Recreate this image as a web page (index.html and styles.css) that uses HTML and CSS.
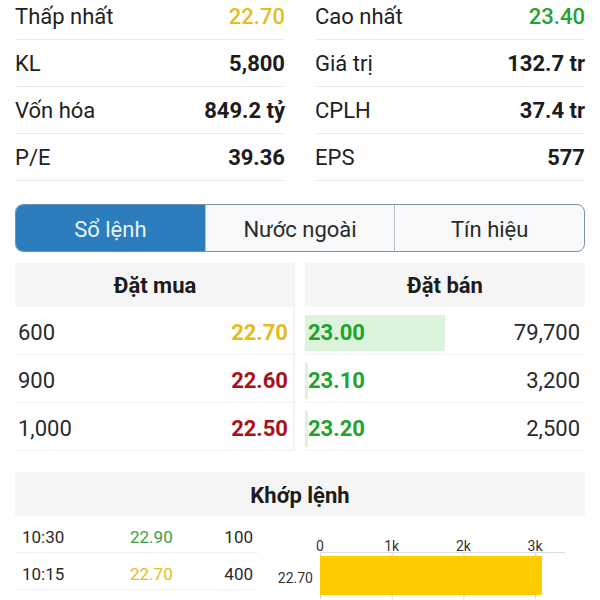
FILE: index.html
```html
<!DOCTYPE html>
<html lang="vi">
  <head>
    <meta charset="UTF-8" />
    <meta name="viewport" content="width=device-width, initial-scale=1" />
    <title>Sổ lệnh</title>
    <link rel="stylesheet" href="styles.css">
  </head>
  <body>
    <div class="page">
      <div class="stats">
        <div class="stat"><span class="label">Thấp nhất</span><span class="val plain yellow">22.70</span></div>
        <div class="stat"><span class="label">Cao nhất</span><span class="val plain green">23.40</span></div>
        <div class="stat"><span class="label">KL</span><span class="val">5,800</span></div>
        <div class="stat"><span class="label">Giá trị</span><span class="val">132.7 tr</span></div>
        <div class="stat"><span class="label">Vốn hóa</span><span class="val">849.2 tỷ</span></div>
        <div class="stat"><span class="label">CPLH</span><span class="val">37.4 tr</span></div>
        <div class="stat"><span class="label">P/E</span><span class="val">39.36</span></div>
        <div class="stat"><span class="label">EPS</span><span class="val">577</span></div>
      </div>

      <div class="tabs">
        <div class="tab active">Sổ lệnh</div>
        <div class="tab">Nước ngoài</div>
        <div class="tab">Tín hiệu</div>
      </div>

      <div class="book">
        <div class="side buy">
          <div class="side-head">Đặt mua</div>
          <div class="row"><span class="qty">600</span><span class="price yellow">22.70</span></div>
          <div class="row"><span class="qty">900</span><span class="price red">22.60</span></div>
          <div class="row"><span class="qty">1,000</span><span class="price red">22.50</span></div>
        </div>
        <div class="side sell">
          <div class="side-head">Đặt bán</div>
          <div class="row"><span class="depth" style="width: 140px"></span><span class="price green">23.00</span><span class="qty">79,700</span></div>
          <div class="row"><span class="depth" style="width: 3px"></span><span class="price green">23.10</span><span class="qty">3,200</span></div>
          <div class="row"><span class="depth" style="width: 3px"></span><span class="price green">23.20</span><span class="qty">2,500</span></div>
        </div>
      </div>

      <div class="match">
        <div class="match-head">Khớp lệnh</div>
        <div class="match-body">
          <div class="trades">
            <div class="trade"><span>10:30</span><span class="green-soft">22.90</span><span class="num">100</span></div>
            <div class="trade"><span>10:15</span><span class="yellow">22.70</span><span class="num">400</span></div>
          </div>
          <div class="chart">
            <div></div>
            <div class="axis">
              <span class="tick" style="left: 0px">0</span>
              <span class="tick" style="left: 71.7px">1k</span>
              <span class="tick" style="left: 143.4px">2k</span>
              <span class="tick" style="left: 215.1px">3k</span>
            </div>
            <div class="bar-label">22.70</div>
            <div class="plot">
              <div class="bar" style="width: 222px"></div>
            </div>
          </div>
        </div>
      </div>
    </div>
  </body>
</html>
```

FILE: styles.css
```css
body {
  margin: 0;
  font-family: Roboto, "Liberation Sans", sans-serif;
  color: #222;
  background-color: #fff;
}
.page {
  padding: 0 15px;
}
.yellow {
  color: #e3bd1e;
}
.green {
  color: #1fa22e;
}
.green-soft {
  color: #3d9e46;
}
.red {
  color: #a8101a;
}

/* thong tin co phieu */
.stats {
  display: grid;
  grid-template-columns: 1fr 1fr;
  column-gap: 30px;
  margin-top: -7px;
}
.stat {
  display: flex;
  justify-content: space-between;
  align-items: center;
  height: 45px;
  padding-top: 1px;
  border-bottom: 1px solid #ececec;
  font-size: 22px;
}
.val {
  font-weight: bold;
  color: #1c1c1c;
}
.val.plain {
  font-weight: 500;
}
.val.plain.yellow {
  color: #e3bd1e;
}
.val.plain.green {
  color: #1fa22e;
}

/* tabs */
.tabs {
  display: flex;
  margin-top: 23px;
  height: 46px;
  border: 1px solid #7593ab;
  border-radius: 8px;
  overflow: hidden;
  background-color: #f8f9fa;
}
.tab {
  flex: 1;
  display: flex;
  justify-content: center;
  align-items: center;
  padding-top: 2px;
  font-size: 22px;
  color: #2a2a2a;
  border-left: 1px solid #b5c3cf;
}
.tab:first-child {
  border-left: none;
}
.tab.active {
  background-color: #2b7dbd;
  color: #e9f4ff;
}

/* so lenh */
.book {
  display: grid;
  grid-template-columns: 1fr 1fr;
  column-gap: 10px;
  margin-top: 11px;
}
.side-head {
  height: 43px;
  padding-top: 1px;
  display: flex;
  justify-content: center;
  align-items: center;
  background-color: #f5f5f5;
  font-size: 22px;
  font-weight: bold;
  color: #1c1c1c;
}
.row {
  position: relative;
  display: flex;
  justify-content: space-between;
  align-items: center;
  height: 44px;
  padding-top: 3px;
  border-bottom: 1px solid #f0f0f0;
  font-size: 22px;
}
.buy .row {
  padding-left: 3px;
  padding-right: 5px;
  border-right: 2px solid #f2f2f2;
}
.sell .row {
  padding-left: 3px;
  padding-right: 5px;
}
.price {
  position: relative;
  font-weight: bold;
}
.qty {
  position: relative;
  color: #2a2a2a;
}
.depth {
  position: absolute;
  left: 0;
  top: 8px;
  bottom: 3px;
  background-color: #dcf3dc;
}

/* khop lenh */
.match {
  margin-top: 21px;
}
.match-head {
  height: 42px;
  padding-top: 2px;
  display: flex;
  justify-content: center;
  align-items: center;
  background-color: #f5f5f5;
  font-size: 22px;
  font-weight: bold;
  color: #1c1c1c;
}
.match-body {
  display: flex;
}
.trades {
  width: 243px;
}
.trade {
  display: grid;
  grid-template-columns: 108px 1fr auto;
  align-items: center;
  height: 31px;
  padding: 5px 5px 0 7px;
  border-bottom: 1px solid #f0f0f0;
  font-size: 17px;
  color: #2a2a2a;
}
.num {
  text-align: right;
}
.chart {
  display: grid;
  grid-template-columns: 55px 245px;
  grid-template-rows: 37px 46px;
  column-gap: 7px;
}
.axis {
  position: relative;
  border-bottom: 1px solid #dcdcdc;
}
.tick {
  position: absolute;
  bottom: -2px;
  transform: translateX(-50%);
  font-size: 14px;
  color: #333;
}
.bar-label {
  display: flex;
  justify-content: flex-end;
  align-items: center;
  height: 43px;
  padding-top: 3px;
  font-size: 14px;
  color: #333;
}
.plot {
  background-image: linear-gradient(to right, #d6d6d6 1px, transparent 1px);
  background-size: 71.7px 100%;
  padding-top: 3px;
}
.bar {
  height: 39px;
  background-color: #ffcc00;
}
```
